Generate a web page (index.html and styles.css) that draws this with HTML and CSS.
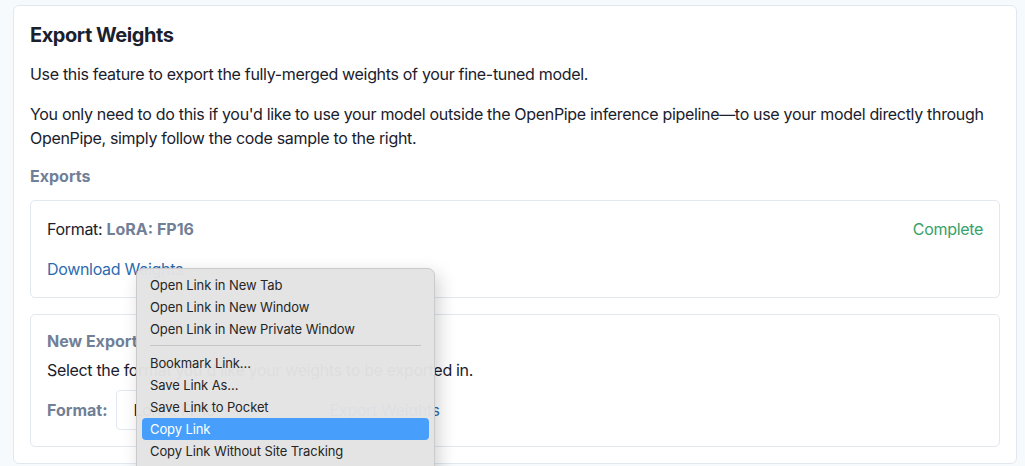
FILE: index.html
```html
<!DOCTYPE html>
<html>
<head>
<meta charset="utf-8">
<link rel="stylesheet" href="styles.css">
</head>
<body>
<div class="page">
  <section class="panel">
    <h2 class="title">Export Weights</h2>
    <p class="text p1">Use this feature to export the fully-merged weights of your fine-tuned model.</p>
    <p class="text p2">You only need to do this if you'd like to use your model outside the OpenPipe inference pipeline—to use your model directly through OpenPipe, simply follow the code sample to the right.</p>
    <h3 class="label">Exports</h3>
    <div class="card card-export">
      <div class="row">
        <div class="text">Format: <span class="fmt">LoRA: FP16</span></div>
        <div class="status">Complete</div>
      </div>
      <a class="link dl" href="#">Download Weights</a>
    </div>
    <div class="card card-new">
      <h3 class="label">New Export</h3>
      <p class="text sel">Select the format you'd like your weights to be exported in.</p>
      <div class="form-row">
        <span class="label">Format:</span>
        <div class="select">LoRA: FP16</div>
        <a class="link" href="#">Export Weights</a>
      </div>
    </div>
  </section>
</div>
<div class="menu">
  <div class="item">Open Link in New Tab</div>
  <div class="item">Open Link in New Window</div>
  <div class="item">Open Link in New Private Window</div>
  <div class="sep"></div>
  <div class="item">Bookmark Link…</div>
  <div class="item">Save Link As…</div>
  <div class="item">Save Link to Pocket</div>
  <div class="item active">Copy Link</div>
  <div class="item">Copy Link Without Site Tracking</div>
</div>
</body>
</html>
```
FILE: styles.css
```css
html, body {
  margin: 0;
  padding: 0;
  height: 100%;
  overflow: hidden;
}
body {
  background: #f7fafc;
  font-family: Inter, "Noto Sans", sans-serif;
  color: #1a202c;
  font-size: 16px;
  letter-spacing: -0.32px;
}
.page {
  padding: 5px 8px 0 13px;
}
.panel {
  background: #fff;
  border: 1px solid #e2e8f0;
  border-radius: 6px;
  padding: 15px 16px 16px 16px;
  height: 426px;
}
.title {
  margin: 0;
  font-size: 20px;
  line-height: 28px;
  font-weight: 700;
  color: #1a202c;
  letter-spacing: -0.45px;
}
.text {
  margin: 0;
  line-height: 24px;
}
.p1 { margin-top: 13px; }
.p2 { margin-top: 16px; }
.label {
  margin: 0;
  font-size: 16px;
  line-height: 24px;
  font-weight: 700;
  color: #718096;
  letter-spacing: 0;
}
.panel > .label { margin-top: 14px; }
.card {
  border: 1px solid #e2e8f0;
  border-radius: 5px;
  padding: 16px;
}
.card-export { margin-top: 12px; }
.row {
  display: flex;
  justify-content: space-between;
  line-height: 24px;
}
.fmt { font-weight: 700; color: #718096; letter-spacing: 0; }
.status { color: #38a169; }
.link {
  color: #2b6cb0;
  text-decoration: none;
  line-height: 24px;
}
.dl { display: inline-block; margin-top: 16px; }
.card-new {
  margin-top: 16px;
  padding-top: 14px;
}
.sel { margin-top: 5px; }
.form-row {
  margin-top: 8px;
  display: flex;
  align-items: center;
  gap: 9px;
}
.select {
  width: 174px;
  height: 38px;
  border: 1px solid #e2e8f0;
  border-radius: 4px;
  padding-left: 16px;
  display: flex;
  align-items: center;
  margin-right: 12px;
}
.menu {
  position: absolute;
  left: 136px;
  top: 268px;
  width: 297px;
  height: 240px;
  background: rgba(227, 227, 227, 0.97);
  border: 1px solid #cbcbcb;
  border-radius: 7px;
  padding-top: 5px;
  box-shadow: 4px 6px 18px rgba(0, 0, 0, 0.18);
  font-family: Inter, "Noto Sans", sans-serif;
  font-size: 13px;
  letter-spacing: -0.1px;
  color: #262626;
}
.item {
  height: 22px;
  line-height: 22px;
  margin: 0 5px;
  padding-left: 8px;
  border-radius: 4px;
}
.item.active {
  background: #479ffb;
  color: #fff;
}
.sep {
  height: 1px;
  background: #c6c6c6;
  margin: 5px 13px 6px 13px;
}
```
